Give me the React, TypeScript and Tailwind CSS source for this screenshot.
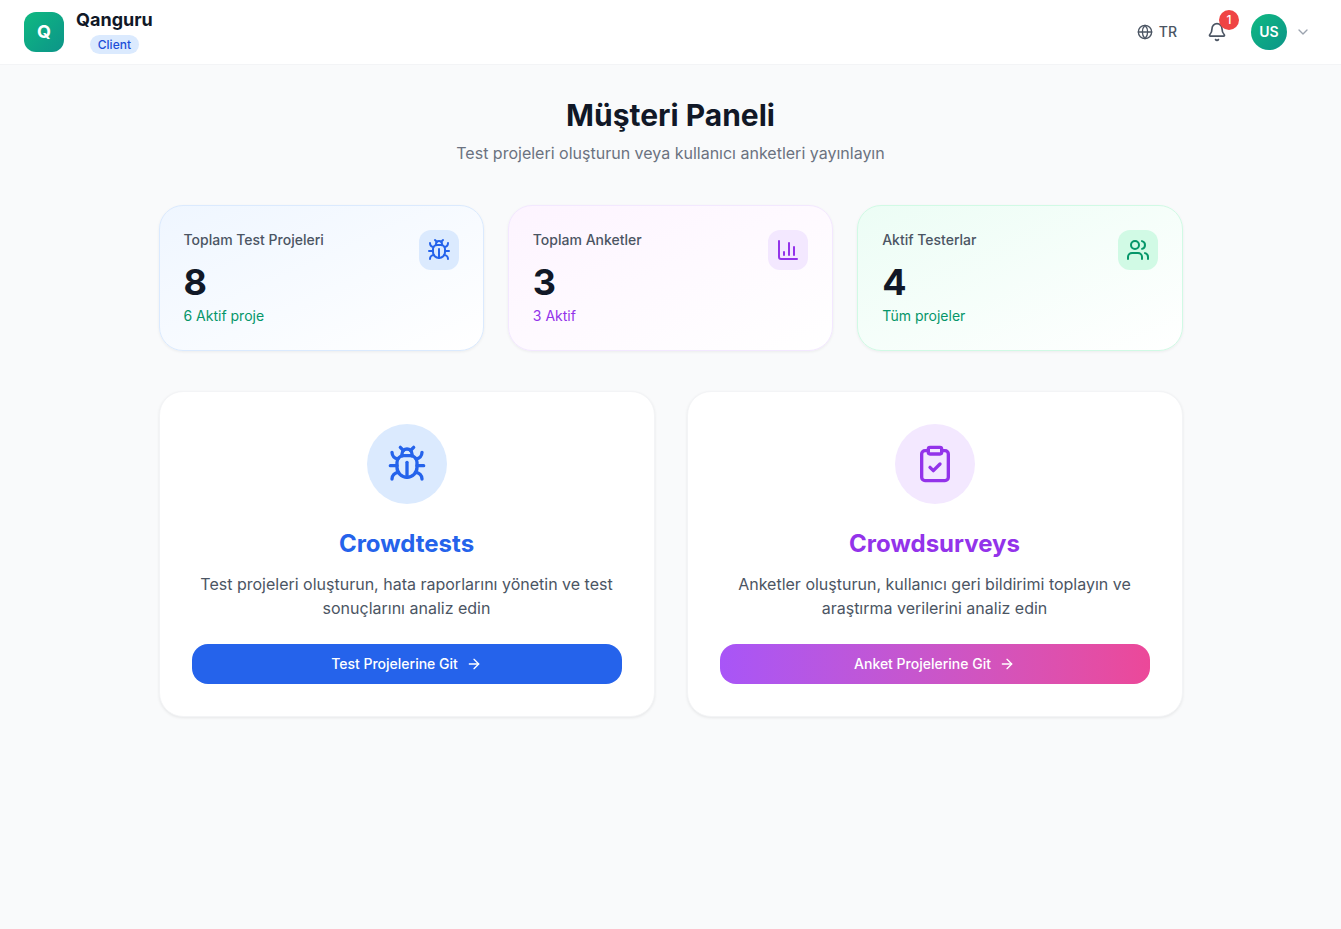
import React from 'react';
import { ArrowRight, Bell, Bug, ChartColumn, ChevronDown, ClipboardCheck, Globe, Users } from 'lucide-react';

const stats = [
    {
        label: 'Toplam Test Projeleri',
        value: '8',
        note: '6 Aktif proje',
        card: 'from-[#eff6ff] border-[#dbeafe]',
        noteColor: 'text-[#059669]',
        iconBox: 'bg-[#dbeafe] text-[#2563eb]',
        icon: <Bug className="w-6 h-6" />,
    },
    {
        label: 'Toplam Anketler',
        value: '3',
        note: '3 Aktif',
        card: 'from-[#fdf4ff] border-[#f3e8ff]',
        noteColor: 'text-[#9333ea]',
        iconBox: 'bg-[#f3e8ff] text-[#9333ea]',
        icon: <ChartColumn className="w-6 h-6" />,
    },
    {
        label: 'Aktif Testerlar',
        value: '4',
        note: 'Tüm projeler',
        card: 'from-[#ecfdf5] border-[#d1fae5]',
        noteColor: 'text-[#059669]',
        iconBox: 'bg-[#d1fae5] text-[#059669]',
        icon: <Users className="w-6 h-6" />,
    },
];

const App: React.FC = () => {
    return (
        <div className="min-h-[929px] bg-[#f9fafb] font-['Inter',sans-serif] antialiased">

            {/* Header */}
            <header className="h-[65px] bg-white border-b border-[#f3f4f6] px-6 flex items-center justify-between">
                <div className="flex items-center gap-3">
                    <div className="w-10 h-10 rounded-xl bg-gradient-to-br from-[#10b981] to-[#0d9488] flex items-center justify-center text-white text-lg font-bold">
                        Q
                    </div>
                    <div className="flex flex-col items-center pb-[4px]">
                        <span className="text-lg leading-7 font-bold text-[#111827]">Qanguru</span>
                        <span className="mt-px h-[19px] px-2 rounded-full bg-[#dbeafe] text-[#1d4ed8] text-xs leading-[19px] font-medium">Client</span>
                    </div>
                </div>

                <div className="flex items-center">
                    <button className="flex items-center gap-1.5 px-3 py-2 text-sm font-medium text-[#4b5563]">
                        <Globe className="w-4 h-4" />
                        <span>TR</span>
                    </button>
                    <button className="relative ml-2.5 p-2 text-[#4b5563]">
                        <Bell className="w-5 h-5" />
                        <span className="absolute -top-1 -right-1 w-5 h-5 rounded-full bg-[#ef4444] text-white text-xs font-medium flex items-center justify-center">1</span>
                    </button>
                    <button className="ml-4 mr-1.5 flex items-center gap-2">
                        <span className="w-9 h-9 rounded-full bg-gradient-to-br from-[#10b981] to-[#0d9488] text-white text-sm font-semibold flex items-center justify-center">US</span>
                        <ChevronDown className="w-4 h-4 text-[#9ca3af]" />
                    </button>
                </div>
            </header>

            <main className="max-w-5xl mx-auto py-8">
                {/* Title */}
                <div className="text-center mb-10">
                    <h1 className="text-3xl font-bold text-[#111827] mb-2">Müşteri Paneli</h1>
                    <p className="text-base text-[#6b7280]">Test projeleri oluşturun veya kullanıcı anketleri yayınlayın</p>
                </div>

                {/* Stat cards */}
                <div className="grid grid-cols-3 gap-6 mb-10">
                    {stats.map((stat) => (
                        <div key={stat.label} className={`bg-gradient-to-br to-white border rounded-3xl p-6 shadow-[0_1px_3px_rgba(0,0,0,0.06)] flex items-start justify-between ${stat.card}`}>
                            <div>
                                <p className="text-sm font-medium text-[#4b5563]">{stat.label}</p>
                                <p className="mt-3 text-4xl font-bold text-[#111827]">{stat.value}</p>
                                <p className={`mt-1 text-sm ${stat.noteColor}`}>{stat.note}</p>
                            </div>
                            <div className={`w-10 h-10 rounded-xl flex items-center justify-center ${stat.iconBox}`}>
                                {stat.icon}
                            </div>
                        </div>
                    ))}
                </div>

                {/* Product cards */}
                <div className="grid grid-cols-2 gap-8">
                    <div className="bg-white border border-[#f3f4f6] rounded-3xl p-8 shadow-[0_1px_3px_rgba(0,0,0,0.08)] flex flex-col items-center text-center">
                        <div className="w-20 h-20 rounded-full bg-[#dbeafe] text-[#2563eb] flex items-center justify-center mb-6">
                            <Bug className="w-10 h-10" />
                        </div>
                        <h2 className="text-2xl font-bold text-[#2563eb] mb-3">Crowdtests</h2>
                        <p className="text-base text-[#4b5563] mb-6">Test projeleri oluşturun, hata raporlarını yönetin ve test sonuçlarını analiz edin</p>
                        <button className="w-full h-10 rounded-2xl bg-[#2563eb] text-white text-sm font-medium flex items-center justify-center gap-2">
                            Test Projelerine Git
                            <ArrowRight className="w-4 h-4" />
                        </button>
                    </div>

                    <div className="bg-white border border-[#f3f4f6] rounded-3xl p-8 shadow-[0_1px_3px_rgba(0,0,0,0.08)] flex flex-col items-center text-center">
                        <div className="w-20 h-20 rounded-full bg-[#f3e8ff] text-[#9333ea] flex items-center justify-center mb-6">
                            <ClipboardCheck className="w-10 h-10" />
                        </div>
                        <h2 className="text-2xl font-bold text-[#9333ea] mb-3">Crowdsurveys</h2>
                        <p className="text-base text-[#4b5563] mb-6">Anketler oluşturun, kullanıcı geri bildirimi toplayın ve araştırma verilerini analiz edin</p>
                        <button className="w-full h-10 rounded-2xl bg-gradient-to-r from-[#a855f7] to-[#ec4899] text-white text-sm font-medium flex items-center justify-center gap-2">
                            Anket Projelerine Git
                            <ArrowRight className="w-4 h-4" />
                        </button>
                    </div>
                </div>
            </main>
        </div>
    );
};

export default App;
